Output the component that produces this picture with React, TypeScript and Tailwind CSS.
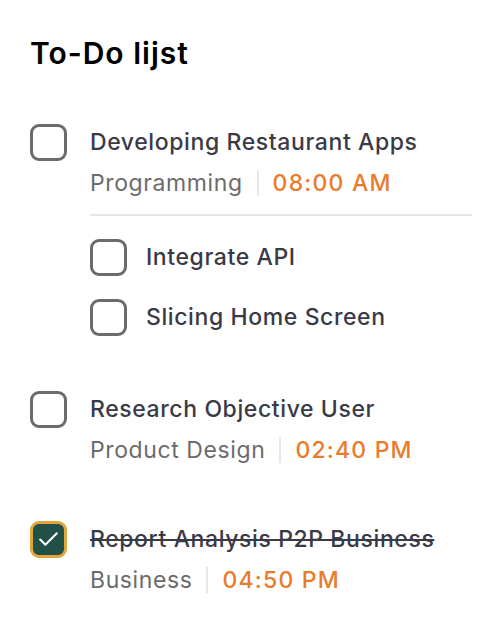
import { Check } from "lucide-react";

interface SubTask {
  title: string;
}

interface Task {
  title: string;
  category: string;
  time: string;
  done?: boolean;
  subtasks?: SubTask[];
}

const tasks: Task[] = [
  {
    title: "Developing Restaurant Apps",
    category: "Programming",
    time: "08:00 AM",
    subtasks: [{ title: "Integrate API" }, { title: "Slicing Home Screen" }],
  },
  { title: "Research Objective User", category: "Product Design", time: "02:40 PM" },
  { title: "Report Analysis P2P Business", category: "Business", time: "04:50 PM", done: true },
];

function Box({ done }: { done?: boolean }) {
  if (done) {
    return (
      <div className="w-[37px] h-[37px] shrink-0 rounded-[9px] border-[3px] border-[#e3a43c] bg-[#215046] flex items-center justify-center">
        <Check className="w-[25px] h-[25px] text-white" strokeWidth={2} />
      </div>
    );
  }
  return <div className="w-[37px] h-[37px] shrink-0 rounded-[9px] border-[3px] border-[#6b6b6b] bg-white" />;
}

export default function App() {
  return (
    <div className="min-h-screen bg-white pl-[30px] pr-[22px] pt-[33px] font-['Inter',sans-serif]">
      <h1 className="text-[30px] font-semibold text-black tracking-[1px] leading-[40px]">To-Do lijst</h1>

      <div className="mt-[51px] flex flex-col gap-[55px]">
        {tasks.map((task) => (
          <div key={task.title}>
            <div className="flex gap-[23px]">
              <Box done={task.done} />
              <div className="flex-1 -mt-[1px]">
                <p
                  className={`text-[23px] tracking-[0.6px] font-medium leading-[38px] text-[#3a3a46] ${
                    task.done ? "line-through decoration-2" : ""
                  }`}
                >
                  {task.title}
                </p>
                <div className="flex items-center text-[23px] tracking-[0.6px] leading-[32px] mt-[6px]">
                  <span className="text-[#6b6b6b]">{task.category}</span>
                  <span className="mx-[14px] w-[2px] h-[26px] bg-[#e8e8e8]" />
                  <span className="text-[#e97b2c] font-medium tracking-[1.2px]">{task.time}</span>
                </div>
                {task.subtasks && (
                  <div className="border-t-2 border-[#e6e6e6] mt-[15px] pt-[23px] flex flex-col gap-[23px]">
                    {task.subtasks.map((s) => (
                      <div key={s.title} className="flex items-center gap-[19px]">
                        <Box />
                        <span className="text-[23px] tracking-[0.6px] font-medium text-[#3a3a46]">{s.title}</span>
                      </div>
                    ))}
                  </div>
                )}
              </div>
            </div>
          </div>
        ))}
      </div>
    </div>
  );
}
